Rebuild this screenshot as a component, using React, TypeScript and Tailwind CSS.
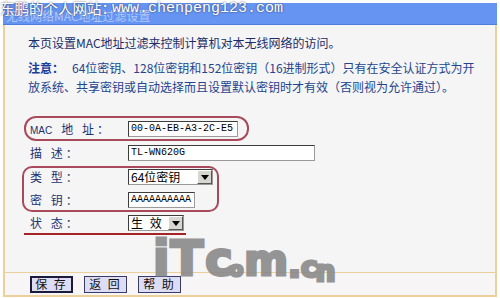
import React from "react";

const cjk = '"Noto Sans CJK SC", "Noto Sans", sans-serif';

function Input({ w, value }: { w: string; value: string }) {
  return (
    <div
      className={`${w} h-[16px] bg-white border border-t-[#3c3c3c] border-l-[#3c3c3c] border-b-[#9a9a9a] border-r-[#9a9a9a] flex items-center pl-[2px] text-[10px] leading-none text-black whitespace-nowrap overflow-hidden`}
      style={{ fontFamily: '"Liberation Mono", monospace' }}
    >
      {value}
    </div>
  );
}

function Select({ w, value, track }: { w: string; value: string; track?: boolean }) {
  return (
    <div className={`${w} h-[16px] bg-white border border-t-[#3c3c3c] border-l-[#3c3c3c] border-b-[#9a9a9a] border-r-[#9a9a9a] flex items-center`}>
      <span className={`flex-1 pl-[2px] text-[12px] leading-none text-black whitespace-pre ${track ? "tracking-[2px]" : ""}`}>{value}</span>
      <span className="w-[15px] h-[14px] bg-[#d8d6d0] border border-t-white border-l-white border-b-[#555] border-r-[#555] flex items-center justify-center">
        <svg width="8" height="5" viewBox="0 0 8 5">
          <path d="M0 0 L8 0 L4 5 Z" fill="#000" />
        </svg>
      </span>
    </div>
  );
}

function Row({ label, h, children }: { label: React.ReactNode; h: string; children: React.ReactNode }) {
  return (
    <div className={`flex items-center ${h}`}>
      <div className="w-[98px] text-[12px] tracking-[3px] text-[#1e3270] whitespace-pre">{label}</div>
      {children}
    </div>
  );
}

function Btn({ label, active }: { label: string; active?: boolean }) {
  return (
    <div
      className={`w-[43px] h-[17px] flex items-center justify-center text-[12px] leading-none tracking-[2px] text-[#111] bg-[#dcdcf4] whitespace-pre ${
        active ? "border-2 border-[#1a1a3a]" : "border border-[#3a3a66]"
      }`}
    >
      {label}
    </div>
  );
}

export default function App() {
  return (
    <div className="w-[500px] h-[298px] bg-white relative overflow-hidden" style={{ fontFamily: cjk }}>
      <div className="h-[3px]" />
      {/* title bar */}
      <div className="mx-[3px] h-[22px] bg-[#6594f2] border-b border-[#4f7fdc] flex items-end pl-[3px] pb-[2px]">
        <span className="text-[12px] leading-none text-[#c4d6fb] opacity-80">无线网络MAC地址过滤设置</span>
      </div>
      {/* main panel */}
      <div className="mx-[3px] h-[247px] bg-[#f5f5f5] border-x-2 border-[#ecd09c] relative">
        <div className="pl-[23px] pr-[20px] pt-[8px] text-[12px] leading-[19px] text-[#1c2d68]">
          <p>本页设置MAC地址过滤来控制计算机对本无线网络的访问。</p>
          <p className="mt-[6px] text-[#24448e]">
            <span className="font-bold text-[#1a3c9c]">注意：</span>
            <span className="ml-[8px]">64位密钥、128位密钥和152位密钥（16进制形式）只有在安全认证方式为开放系统、共享密钥或自动选择而且设置默认密钥时才有效（否则视为允许通过）。</span>
          </p>
        </div>
        <div className="relative mt-[21px] pl-[25px]">
          <Row
            label={
              <>
                <span className="text-[10px] tracking-normal mr-[9px]" style={{ fontFamily: '"Liberation Sans", Arial, sans-serif' }}>MAC</span>
                地 址：
              </>
            }
            h="h-[24px]"
          >
            <Input w="w-[110px]" value="00-0A-EB-A3-2C-E5" />
          </Row>
          <Row label="描 述：" h="h-[24px]">
            <Input w="w-[187px]" value="TL-WN620G" />
          </Row>
          <Row label="类 型：" h="h-[24px]">
            <Select w="w-[85px]" value="64位密钥" />
          </Row>
          <Row label="密 钥：" h="h-[22px]">
            <Input w="w-[67px]" value="AAAAAAAAAA" />
          </Row>
          <Row label="状 态：" h="h-[24px]">
            <Select w="w-[56px]" value="生 效" track />
          </Row>
          {/* annotations */}
          <div className="absolute left-[19px] top-[-1px] w-[225px] h-[25px] rounded-[12px] border-2 border-[#a84a5c]" />
          <div className="absolute left-[17px] top-[49px] w-[197px] h-[46px] rounded-[10px] border-2 border-[#a84a5c]" />
          <div className="absolute left-[19px] top-[116px] w-[162px] h-[2px] bg-[#a42428]" />
        </div>
      </div>
      {/* bottom bar */}
      <div className="mx-[3px] h-[25px] bg-[#f7f5f5] border-t border-b-2 border-x-2 border-[#ecd09c] flex items-center pl-[25px] gap-[11px]">
        <Btn label="保 存" active />
        <Btn label="返 回" />
        <Btn label="帮 助" />
      </div>
      {/* watermark */}
      <div
        className="absolute left-[153px] top-[234px] flex items-end text-[#8a8a8a] font-bold leading-none opacity-90 pointer-events-none [-webkit-text-stroke:3px_#8a8a8a]"
        style={{ fontFamily: '"DejaVu Sans", "Liberation Sans", sans-serif' }}
      >
        <span className="text-[48px] tracking-[1px]">iT</span>
        <span className="text-[46px] ml-[1px]">c</span>
        <span className="text-[20px] -ml-[3px] mb-[3px]">o</span>
        <span className="text-[42px] ml-[1px]">m</span>
        <span className="text-[34px] ml-[0px]">.</span>
        <span className="text-[28px] ml-[0px]">c</span>
        <span className="text-[28px] -ml-[2px] -mb-[4px]">n</span>
      </div>
      {/* overlay site text */}
      <div className="absolute left-0 top-[1px] flex items-center text-white leading-none whitespace-nowrap [text-shadow:0_0_2px_rgba(40,40,60,0.9)]">
        <span className="text-[14.5px]" style={{ fontFamily: cjk }}>东鹏的个人网站：</span>
        <span className="text-[15px] -ml-[4px]" style={{ fontFamily: '"Liberation Mono", monospace' }}>www.chenpeng123.com</span>
      </div>
    </div>
  );
}
